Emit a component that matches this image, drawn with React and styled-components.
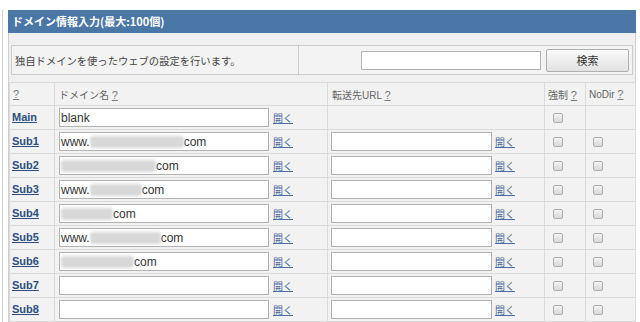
import React from "react";
import styled, { createGlobalStyle } from "styled-components";

const GlobalStyle = createGlobalStyle`
  body {
    margin: 0;
    background: #ffffff;
    font-family: "Liberation Sans", "Noto Sans CJK JP", sans-serif;
  }
`;

const rows = [
  { name: "Main", domain: [{ t: "blank" }], main: true },
  { name: "Sub1", domain: [{ t: "www." }, { b: 94 }, { t: "com" }] },
  { name: "Sub2", domain: [{ b: 95 }, { t: "com" }] },
  { name: "Sub3", domain: [{ t: "www." }, { b: 52 }, { t: "com" }] },
  { name: "Sub4", domain: [{ b: 52 }, { t: "com" }] },
  { name: "Sub5", domain: [{ t: "www." }, { b: 71 }, { t: "com" }] },
  { name: "Sub6", domain: [{ b: 73 }, { t: "com" }] },
  { name: "Sub7", domain: [] },
  { name: "Sub8", domain: [] },
];

const App = () => {
  return (
    <Page>
      <GlobalStyle />
      <Frame>
        <Panel>
          <TitleBar>ドメイン情報入力(最大:100個)</TitleBar>
          <Body>
            <SearchBox>
              <Description>独自ドメインを使ったウェブの設定を行います。</Description>
              <SearchArea>
                <SearchInput type="text" />
                <SearchButton type="button">検索</SearchButton>
              </SearchArea>
            </SearchBox>

            <DomainTable>
              <colgroup>
                <col style={{ width: 45 }} />
                <col style={{ width: 273 }} />
                <col style={{ width: 217 }} />
                <col style={{ width: 41 }} />
                <col style={{ width: 50 }} />
              </colgroup>
              <thead>
                <tr>
                  <HeadCell>
                    <Help>?</Help>
                  </HeadCell>
                  <HeadCell $pad={4}>
                    ドメイン名 <Help>?</Help>
                  </HeadCell>
                  <HeadCell $pad={4}>
                    転送先URL <Help>?</Help>
                  </HeadCell>
                  <HeadCell $pad={3}>
                    強制 <Help>?</Help>
                  </HeadCell>
                  <HeadCell $pad={3}>
                    NoDir <Help>?</Help>
                  </HeadCell>
                </tr>
              </thead>
              <tbody>
                {rows.map((row) => (
                  <Row key={row.name}>
                    <LabelCell>
                      <NameLink href="#">{row.name}</NameLink>
                    </LabelCell>
                    <Cell $pad={4}>
                      <Field $width={210}>
                        {row.domain.map((part, i) =>
                          part.b ? (
                            <Blur key={i} style={{ width: part.b }} />
                          ) : (
                            <span key={i}>{part.t}</span>
                          )
                        )}
                      </Field>
                      <OpenLink href="#">開く</OpenLink>
                    </Cell>
                    <Cell $pad={3}>
                      {!row.main && (
                        <>
                          <Field $width={161} />
                          <OpenLink href="#" $gap={3}>
                            開く
                          </OpenLink>
                        </>
                      )}
                    </Cell>
                    <Cell $pad={8}>
                      <Check type="checkbox" />
                    </Cell>
                    <Cell $pad={7}>{!row.main && <Check type="checkbox" />}</Cell>
                  </Row>
                ))}
              </tbody>
            </DomainTable>
          </Body>
        </Panel>
      </Frame>
    </Page>
  );
};

export default App;

const Page = styled.div`
  padding: 10px 0 0 2px;
  height: 312px;
  overflow: hidden;
`;

const Frame = styled.div`
  border-left: 1px solid #d2d2d2;
  padding-left: 5px;
  height: 100%;
`;

const Panel = styled.div`
  width: 628px;
`;

const TitleBar = styled.div`
  height: 23px;
  line-height: 23px;
  padding-left: 4px;
  background: #4b77a6;
  color: #ffffff;
  font-family: "Noto Sans CJK JP", sans-serif;
  font-size: 11px;
  font-weight: bold;
`;

const Body = styled.div`
  background: #f0f0f0;
  border-left: 1px solid #cfcfcf;
  border-right: 1px solid #cfcfcf;
  padding-top: 12px;
  min-height: 300px;
`;

const SearchBox = styled.div`
  display: flex;
  height: 28px;
  margin: 0 2px 0 2px;
  border: 1px solid #cccccc;
  background: #f3f3f3;
`;

const Description = styled.div`
  width: 283px;
  padding-left: 3px;
  border-right: 1px solid #cccccc;
  display: flex;
  align-items: center;
  color: #444444;
  font-family: "Noto Sans CJK JP", sans-serif;
  font-size: 10.3px;
`;

const SearchArea = styled.div`
  flex: 1;
  display: flex;
  align-items: center;
  justify-content: flex-end;
  gap: 5px;
  padding-right: 3px;
`;

const SearchInput = styled.input`
  box-sizing: border-box;
  width: 180px;
  height: 19px;
  margin: 0;
  border: 1px solid #b2b2b2;
  background: #ffffff;
`;

const SearchButton = styled.button`
  box-sizing: border-box;
  width: 83px;
  height: 23px;
  margin: 0;
  border: 1px solid #b0b0b0;
  border-radius: 2px;
  background: linear-gradient(#fafafa, #e2e2e2);
  color: #333333;
  font-family: "Noto Sans CJK JP", sans-serif;
  font-size: 11px;
`;

const DomainTable = styled.table`
  margin-top: 7px;
  width: 626px;
  table-layout: fixed;
  border-collapse: collapse;
  background: #f2f2f2;
`;

const HeadCell = styled.th`
  height: 22px;
  padding: 0 0 0 ${(p) => p.$pad ?? 3}px;
  border: 1px solid #dadada;
  text-align: left;
  font-weight: normal;
  color: #666666;
  font-family: "Liberation Sans", "Noto Sans CJK JP", sans-serif;
  font-size: 10px;
  white-space: nowrap;
`;

const Help = styled.a`
  color: #7a7a7a;
  text-decoration: underline;
  font-family: "Liberation Sans", sans-serif;
  font-size: 11px;
`;

const Row = styled.tr`
  height: 24px;
`;

const Cell = styled.td`
  padding: 0 0 0 ${(p) => p.$pad}px;
  border: 1px solid #dadada;
  vertical-align: middle;
  white-space: nowrap;
`;

const LabelCell = styled(Cell)`
  padding: 0 0 3px 2px;
`;

const NameLink = styled.a`
  color: #2d4d7e;
  font-family: "Liberation Sans", sans-serif;
  font-size: 11px;
  font-weight: bold;
  text-decoration: underline;
`;

const Field = styled.div`
  box-sizing: border-box;
  display: inline-flex;
  align-items: center;
  vertical-align: middle;
  width: ${(p) => p.$width}px;
  height: 19px;
  padding-left: 1px;
  border: 1px solid #b2b2b2;
  background: #ffffff;
  color: #333333;
  font-family: "Liberation Sans", sans-serif;
  font-size: 12px;
  overflow: hidden;
`;

const Blur = styled.span`
  display: inline-block;
  height: 12px;
  background: #d8d8d8;
  border-radius: 3px;
  filter: blur(1.5px);
`;

const OpenLink = styled.a`
  margin-left: ${(p) => p.$gap ?? 4}px;
  vertical-align: middle;
  color: #4b6d9c;
  text-decoration: underline;
  font-family: "Noto Sans CJK JP", sans-serif;
  font-size: 10px;
`;

const Check = styled.input`
  appearance: none;
  display: block;
  width: 10px;
  height: 10px;
  margin: 0;
  border: 1px solid #aeaeae;
  border-radius: 2px;
  background: linear-gradient(#f4f4f4, #d8d8d8);
`;
